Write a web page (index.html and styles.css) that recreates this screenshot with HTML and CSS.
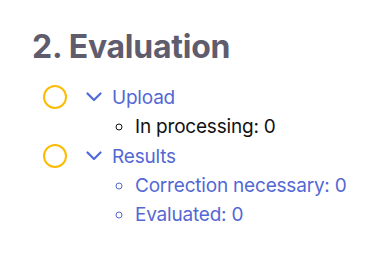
FILE: index.html
```html
<!DOCTYPE html>
<html>
<head>
<meta charset="utf-8">
<link rel="stylesheet" href="styles.css">
</head>
<body>
<section class="panel">
  <h2 class="title">2. Evaluation</h2>
  <div class="group">
    <div class="row">
      <span class="status"></span>
      <svg class="chev" viewBox="0 0 16 10" width="16" height="10"><path d="M1.5 1.5 L8 8 L14.5 1.5" fill="none" stroke="#4f6bdc" stroke-width="2.2" stroke-linecap="round" stroke-linejoin="round"/></svg>
      <span class="link">Upload</span>
    </div>
    <ul class="sub">
      <li class="plain">In processing: 0</li>
    </ul>
  </div>
  <div class="group">
    <div class="row">
      <span class="status"></span>
      <svg class="chev" viewBox="0 0 16 10" width="16" height="10"><path d="M1.5 1.5 L8 8 L14.5 1.5" fill="none" stroke="#4f6bdc" stroke-width="2.2" stroke-linecap="round" stroke-linejoin="round"/></svg>
      <span class="link">Results</span>
    </div>
    <ul class="sub">
      <li class="link">Correction necessary: 0</li>
      <li class="link">Evaluated: 0</li>
    </ul>
  </div>
</section>
</body>
</html>
```
FILE: styles.css
```css
html, body {
  margin: 0;
  padding: 0;
  background: #ffffff;
}
body {
  font-family: Inter, "Liberation Sans", sans-serif;
}
.panel {
  padding: 27px 0 0 32px;
}
.title {
  margin: 0 0 15px 0;
  font-size: 32px;
  line-height: 40px;
  font-weight: 700;
  color: #5f5c6d;
  letter-spacing: -0.25px;
}
.row {
  display: flex;
  align-items: center;
  height: 30px;
  padding-left: 11px;
}
.status {
  width: 20px;
  height: 20px;
  border: 2px solid #fbbc05;
  border-radius: 50%;
  margin-right: 19px;
}
.chev {
  margin-right: 10px;
}
.link {
  color: #5468d4;
}
.row .link, .sub li {
  font-size: 19px;
  letter-spacing: -0.2px;
}
.sub {
  margin: 0;
  padding: 0 0 0 103px;
  list-style: circle;
}
.sub li {
  line-height: 29px;
  padding-left: 0;
}
.plain {
  color: #111111;
}
```
